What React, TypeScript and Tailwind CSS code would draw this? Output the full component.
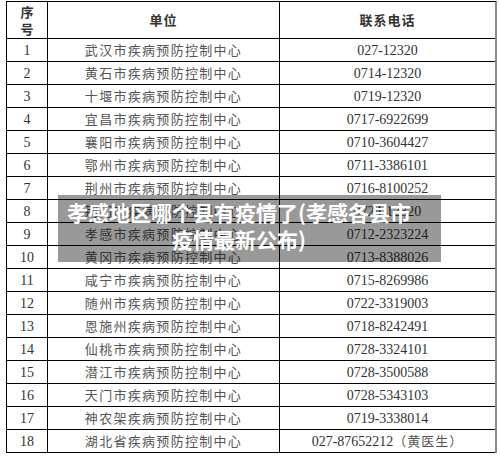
import React from 'react';

const rows = [
  { no: '1', unit: '武汉市疾病预防控制中心', phone: '027-12320' },
  { no: '2', unit: '黄石市疾病预防控制中心', phone: '0714-12320' },
  { no: '3', unit: '十堰市疾病预防控制中心', phone: '0719-12320' },
  { no: '4', unit: '宜昌市疾病预防控制中心', phone: '0717-6922699' },
  { no: '5', unit: '襄阳市疾病预防控制中心', phone: '0710-3604427' },
  { no: '6', unit: '鄂州市疾病预防控制中心', phone: '0711-3386101' },
  { no: '7', unit: '荆州市疾病预防控制中心', phone: '0716-8100252' },
  { no: '8', unit: '荆门市疾病预防控制中心', phone: '0724-12320' },
  { no: '9', unit: '孝感市疾病预防控制中心', phone: '0712-2323224' },
  { no: '10', unit: '黄冈市疾病预防控制中心', phone: '0713-8388026' },
  { no: '11', unit: '咸宁市疾病预防控制中心', phone: '0715-8269986' },
  { no: '12', unit: '随州市疾病预防控制中心', phone: '0722-3319003' },
  { no: '13', unit: '恩施州疾病预防控制中心', phone: '0718-8242491' },
  { no: '14', unit: '仙桃市疾病预防控制中心', phone: '0728-3324101' },
  { no: '15', unit: '潜江市疾病预防控制中心', phone: '0728-3500588' },
  { no: '16', unit: '天门市疾病预防控制中心', phone: '0728-5343103' },
  { no: '17', unit: '神农架疾病预防控制中心', phone: '0719-3338014' },
  { no: '18', unit: '湖北省疾病预防控制中心', phone: '027-87652212（黄医生）' },
];

const cjk = "font-['Noto_Sans_CJK_SC',sans-serif]";
const serif = "font-['Liberation_Serif','Noto_Sans_CJK_SC',serif]";

// splits the phone into digits and the trailing CJK note
const Phone = ({ value }: { value: string }) => {
  const idx = value.indexOf('（');
  if (idx < 0) return <span>{value}</span>;
  return (
    <span>
      {value.slice(0, idx)}
      <span className={`${cjk} text-[13px] tracking-[1px] text-[#555]`}>{value.slice(idx)}</span>
    </span>
  );
};

const App = () => {
  return (
    <div className="relative w-[500px] h-[458px] bg-white overflow-hidden pt-[1px] pl-[6px]">
      <div className="w-[491px] border-l border-t border-black border-r-2 border-r-[#8c8c8c]">
        {/* header */}
        <div className="grid grid-cols-[41px_232px_1fr] h-[37px] border-b border-black">
          <div className={`${cjk} border-r border-black flex flex-col items-center justify-center text-[13px] font-bold leading-[17px] text-[#333]`}>
            <span>序</span>
            <span>号</span>
          </div>
          <div className={`${cjk} border-r border-black flex items-center justify-center text-[13px] font-bold tracking-[1px] text-[#333]`}>
            单位
          </div>
          <div className={`${cjk} flex items-center justify-center text-[13px] font-bold tracking-[1px] text-[#333]`}>
            联系电话
          </div>
        </div>

        {rows.map((r) => (
          <div key={r.no} className="grid grid-cols-[41px_232px_1fr] h-[23px] border-b border-black">
            <div className={`${serif} border-r border-black flex items-center justify-center text-[14px] text-[#333]`}>
              {r.no}
            </div>
            <div className={`${cjk} border-r border-black flex items-center justify-center text-[13px] tracking-[1.3px] text-[#555]`}>
              {r.unit}
            </div>
            <div className={`${serif} flex items-center justify-center text-[14px] text-[#333]`}>
              <Phone value={r.phone} />
            </div>
          </div>
        ))}
      </div>

      {/* title overlay */}
      <div className="absolute left-[58px] top-[195px] w-[383px] h-[67px] bg-black/40 pl-[6px] pr-[27px] pt-[4px]">
        <p className={`${cjk} text-white text-[21px] font-bold leading-[27px] text-center`}>
          孝感地区哪个县有疫情了(孝感各县市疫情最新公布)
        </p>
      </div>
    </div>
  );
};

export default App;
